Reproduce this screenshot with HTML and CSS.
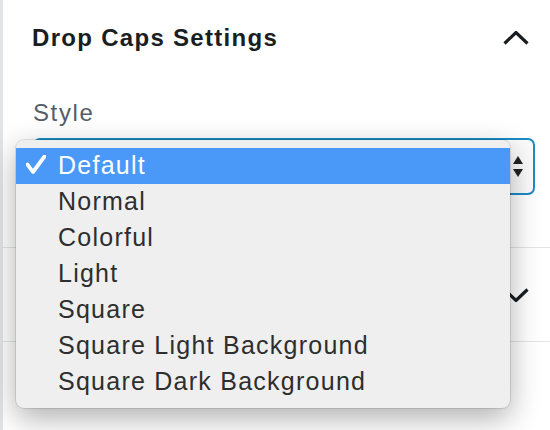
FILE: index.html
```html
<!DOCTYPE html>
<html>
<head>
<meta charset="utf-8">
<link rel="stylesheet" href="styles.css">
</head>
<body>
<div class="sidebar">
  <section class="panel">
    <div class="panel-header">
      <h2 class="panel-title">Drop Caps Settings</h2>
      <svg class="chevron" width="26" height="14" viewBox="0 0 26 14"><polyline points="1.5,12.5 13,1.5 24.5,12.5" /></svg>
    </div>
    <div class="panel-body">
      <label class="field-label">Style</label>
      <div class="select">
        <svg class="select-arrows" width="10" height="22" viewBox="0 0 10 22"><polygon points="0,8 5,0 10,8" /><polygon points="0,13 5,21 10,13" /></svg>
      </div>
    </div>
  </section>
  <section class="panel">
    <div class="panel-header panel-header-closed">
      <svg class="chevron" width="26" height="14" viewBox="0 0 26 14"><polyline points="1.5,1.5 13,12.5 24.5,1.5" /></svg>
    </div>
  </section>

  <ul class="menu">
    <li class="menu-item is-selected">
      <svg class="check" width="20" height="19" viewBox="0 0 20 19"><path d="M1.5 9.5 L7 17 L18.5 1.5" /></svg>
      <span>Default</span>
    </li>
    <li class="menu-item"><span>Normal</span></li>
    <li class="menu-item"><span>Colorful</span></li>
    <li class="menu-item"><span>Light</span></li>
    <li class="menu-item"><span>Square</span></li>
    <li class="menu-item"><span>Square Light Background</span></li>
    <li class="menu-item"><span>Square Dark Background</span></li>
  </ul>
</div>
</body>
</html>
```
FILE: styles.css
```css
html, body {
  margin: 0;
  padding: 0;
  background: #ffffff;
}

body {
  font-family: "Liberation Sans", Arial, sans-serif;
  width: 550px;
  height: 430px;
  overflow: hidden;
}

.sidebar {
  position: relative;
  height: 430px;
  border-left: 3px solid #e2e4e7;
  box-sizing: border-box;
}

.panel {
  border-bottom: 1px solid #e2e4e7;
}

.panel-header {
  height: 76px;
  display: flex;
  align-items: center;
  justify-content: space-between;
  padding: 0 21px 0 29px;
}

.panel-header-closed {
  height: 93px;
  justify-content: flex-end;
}

.panel-title {
  margin: 0;
  font-size: 24px;
  font-weight: bold;
  letter-spacing: 1.3px;
  color: #191e23;
  line-height: 28px;
}

.chevron polyline {
  fill: none;
  stroke: #191e23;
  stroke-width: 3.2;
  stroke-linejoin: miter;
}

.panel-body {
  padding: 23px 15px 52px 30px;
}

.field-label {
  display: block;
  font-size: 24px;
  line-height: 28px;
  letter-spacing: 1.6px;
  color: #555d66;
  margin-bottom: 11px;
}

.select {
  height: 57px;
  box-sizing: border-box;
  border: 2px solid #1a8cc4;
  border-radius: 7px;
  display: flex;
  align-items: center;
  justify-content: flex-end;
  padding: 0 10px 0 24px;
  background: #fbfbfb;
}

.select-arrows polygon {
  fill: #222;
}

.menu {
  position: absolute;
  left: 13px;
  top: 140px;
  width: 494px;
  margin: 0;
  padding: 8px 0;
  list-style: none;
  background: #efefef;
  border-radius: 8px;
  box-shadow: 0 0 0 1px rgba(0, 0, 0, 0.1), 0 10px 30px rgba(0, 0, 0, 0.32);
}

.menu-item {
  height: 36px;
  display: flex;
  align-items: center;
  padding: 0 0 2px 42px;
  box-sizing: border-box;
  font-size: 25px;
  letter-spacing: 1.25px;
  color: #2e2e2e;
  position: relative;
}

.menu-item.is-selected {
  background: #4a98f7;
  color: #ffffff;
}

.check {
  position: absolute;
  left: 10px;
  top: 7px;
}

.check path {
  fill: none;
  stroke: #ffffff;
  stroke-width: 3.8;
  stroke-linecap: round;
  stroke-linejoin: round;
}
```
